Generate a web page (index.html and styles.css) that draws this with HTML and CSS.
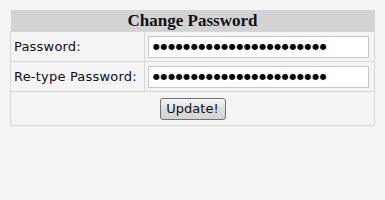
FILE: index.html
```html
<!DOCTYPE html>
<html>
<head>
    <title>Change Password</title>
    <link rel="stylesheet" href="styles.css">
</head>
<body>
    <form class="pw-form">
        <table class="pw-table">
            <tr>
                <th colspan="2" class="pw-head">Change Password</th>
            </tr>
            <tr>
                <td class="pw-label">Password:</td>
                <td class="pw-field"><input type="text" value="●●●●●●●●●●●●●●●●●●●●●●●"></td>
            </tr>
            <tr>
                <td class="pw-label">Re-type Password:</td>
                <td class="pw-field"><input type="text" value="●●●●●●●●●●●●●●●●●●●●●●●"></td>
            </tr>
            <tr>
                <td colspan="2" class="pw-submit"><button type="button">Update!</button></td>
            </tr>
        </table>
    </form>
</body>
</html>
```

FILE: styles.css
```css
body {
    margin: 10px;
    background: #f4f4f4;
    font-family: "DejaVu Sans", Verdana, sans-serif;
    font-size: 13px;
}
.pw-table {
    width: 365px;
    border-collapse: collapse;
    background: #f4f4f4;
}
.pw-head {
    background: #d3d3d3;
    font-family: "Liberation Serif", serif;
    font-size: 17px;
    font-weight: bold;
    height: 21px;
    padding: 0;
    text-align: center;
    color: #111;
}
.pw-table td {
    border: 1px solid #d6d6d6;
    height: 29px;
    padding: 0 3px;
}
.pw-label {
    width: 127px;
    color: #111;
    white-space: nowrap;
    letter-spacing: 0.2px;
}
.pw-field input {
    width: 221px;
    height: 22px;
    box-sizing: border-box;
    border: 1px solid #c8c8c8;
    background: #fff;
    padding: 0 4px;
    font-size: 8px;
    letter-spacing: 0.6px;
    font-family: "DejaVu Sans", Verdana, sans-serif;
    color: #000;
    outline: none;
}
.pw-table td.pw-submit {
    text-align: center;
    height: 33px;
}
.pw-submit button {
    width: 66px;
    height: 22px;
    font-family: "DejaVu Sans", Verdana, sans-serif;
    font-size: 13px;
    color: #111;
    border: 1px solid #707070;
    border-radius: 3px;
    background: linear-gradient(#f6f6f6, #dddddd 50%, #d3d3d3);
    padding: 0;
}
```
